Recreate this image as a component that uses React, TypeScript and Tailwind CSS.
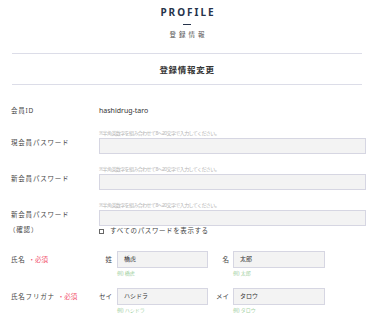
import React from "react";

const HINT = "※半角英数字を組み合わせて8～20文字で入力してください。";

function Required() {
  return <span className="ml-[3px] text-[#f2556f] tracking-normal">・必須</span>;
}

function PasswordField() {
  return (
    <div className="flex flex-col">
      <p className="text-[5px] leading-[6px] tracking-[-0.6px] text-[#b4b4b4] whitespace-nowrap">{HINT}</p>
      <div className="mt-[2px] h-[16px] w-[267px] border border-[#d6d6e2] bg-[#f3f3f3]" />
    </div>
  );
}

function NameField({ label, labelW, value, example, inputW }: { label: string; labelW: string; value: string; example: string; inputW: string }) {
  return (
    <div className="flex items-start">
      <span className={`${labelW} h-[17px] flex items-center justify-end text-[6.5px] text-[#444]`}>{label}</span>
      <div className="flex flex-col">
        <div className={`${inputW} h-[17px] border border-[#d6d6e2] bg-[#f3f3f3] pl-[6px] flex items-center text-[6px] text-[#333]`}>
          {value}
        </div>
        <p className="mt-[2px] text-[5px] leading-[6px] text-[#9fd09f] whitespace-nowrap">例) {example}</p>
      </div>
    </div>
  );
}

export default function App() {
  return (
    <div className="w-[374px] min-h-[313px] bg-white font-['Noto_Sans','Noto_Sans_CJK_JP',sans-serif] overflow-hidden">
      {/* ヘッダー */}
      <div className="flex flex-col items-center pt-[6px]">
        <h1 className="text-[10px] leading-[12px] font-bold tracking-[2px] pl-[2px] text-[#26334b]">PROFILE</h1>
        <div className="mt-[6px] h-px w-[8px] bg-[#26334b]" />
        <p className="mt-[6px] text-[6.5px] leading-[8px] tracking-[3px] pl-[3px] text-[#555]">登録情報</p>
      </div>
      <div className="mx-[12px] mt-[14px] h-px bg-[#dcdde8]" />
      <p className="mt-[11px] text-center text-[8.5px] leading-[10px] font-bold tracking-[0.7px] text-[#333]">登録情報変更</p>
      <div className="mx-[12px] mt-[9px] h-px bg-[#dcdde8]" />

      {/* フォーム */}
      <div className="pl-[11px] text-[6.5px] tracking-[0.8px] text-[#444]">
        <div className="mt-[21px] flex items-center leading-[10px]">
          <span className="w-[88px]">会員ID</span>
          <span className="text-[7px] tracking-normal text-[#333]">hashidrug-taro</span>
        </div>

        <div className="mt-[14px] flex items-start">
          <span className="w-[88px] mt-[8px] leading-[10px]">現会員パスワード</span>
          <PasswordField />
        </div>

        <div className="mt-[12px] flex items-start">
          <span className="w-[88px] mt-[8px] leading-[10px]">新会員パスワード</span>
          <PasswordField />
        </div>

        <div className="mt-[12px] flex items-start">
          <span className="w-[88px] mt-[5px] leading-[15px]">
            新会員パスワード
            <br />
            <span className="-ml-[2px]">（確認）</span>
          </span>
          <div className="flex flex-col">
            <PasswordField />
            <label className="mt-[1px] flex items-center leading-[8px] tracking-[0.6px]">
              <span className="w-[5px] h-[5px] border border-[#666] bg-white" />
              <span className="ml-[6px]">すべてのパスワードを表示する</span>
            </label>
          </div>
        </div>

        <div className="mt-[14px] flex items-start">
          <span className="w-[88px] h-[17px] flex items-center">
            氏名<Required />
          </span>
          <div className="flex items-start tracking-normal">
            <NameField label="姓" labelW="w-[18px] pr-[5px]" value="橋虎" example="橋虎" inputW="w-[91px]" />
            <NameField label="名" labelW="w-[25px] pr-[4px]" value="太郎" example="太郎" inputW="w-[92px]" />
          </div>
        </div>

        <div className="mt-[12px] flex items-start">
          <span className="w-[88px] h-[17px] flex items-center">
            氏名フリガナ<Required />
          </span>
          <div className="flex items-start tracking-normal">
            <NameField label="セイ" labelW="w-[18px] pr-[5px]" value="ハシドラ" example="ハシドラ" inputW="w-[91px]" />
            <NameField label="メイ" labelW="w-[25px] pr-[4px]" value="タロウ" example="タロウ" inputW="w-[92px]" />
          </div>
        </div>
      </div>
    </div>
  );
}
